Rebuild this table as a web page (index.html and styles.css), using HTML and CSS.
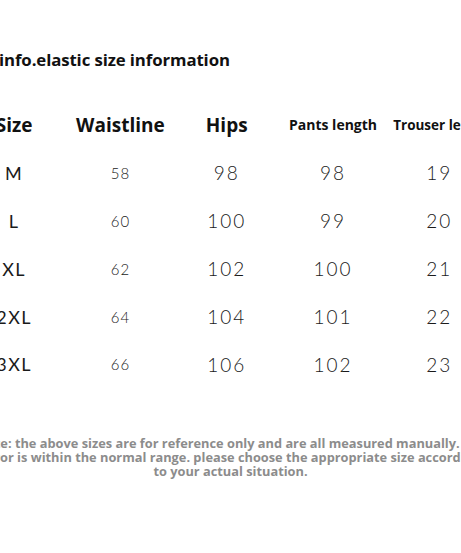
FILE: index.html
```html
<!DOCTYPE html>
<html>
<head>
<meta charset="utf-8">
<link rel="stylesheet" href="styles.css">
</head>
<body>
<div class="page">
  <div class="title">info.elastic size information</div>
  <div class="table">
    <div class="hd">Size</div>
    <div class="hd">Waistline</div>
    <div class="hd">Hips</div>
    <div class="hd sm">Pants length</div>
    <div class="hd xs">Trouser length</div>

    <div class="c sz">M</div><div class="c w">58</div><div class="c">98</div><div class="c">98</div><div class="c">19</div>
    <div class="c sz">L</div><div class="c w">60</div><div class="c">100</div><div class="c">99</div><div class="c">20</div>
    <div class="c sz">XL</div><div class="c w">62</div><div class="c">102</div><div class="c">100</div><div class="c">21</div>
    <div class="c sz">2XL</div><div class="c w">64</div><div class="c">104</div><div class="c">101</div><div class="c">22</div>
    <div class="c sz">3XL</div><div class="c w">66</div><div class="c">106</div><div class="c">102</div><div class="c">23</div>
  </div>
  <div class="note">
    <div>Note: the above sizes are for reference only and are all measured manually. the</div>
    <div>error is within the normal range. please choose the appropriate size according</div>
    <div>to your actual situation.</div>
  </div>
</div>
</body>
</html>
```
FILE: styles.css
```css
html, body {
  margin: 0;
  padding: 0;
  background: #fff;
}
body {
  width: 461px;
  height: 553px;
  overflow: hidden;
}
.page {
  width: 461px;
  height: 553px;
  overflow: hidden;
  font-family: "Open Sans", "Noto Sans", sans-serif;
  color: #111;
}
.title {
  margin-top: 49px;
  margin-left: -1px;
  font-size: 16.8px;
  font-weight: 700;
  line-height: 22px;
  white-space: nowrap;
  letter-spacing: -0.1px;
}
.table {
  margin-top: 30px;
  margin-left: -39px;
  display: grid;
  grid-template-columns: repeat(5, 106.3px);
  grid-auto-rows: 47.9px;
  width: 531.5px;
}
.hd, .c {
  display: flex;
  align-items: center;
  justify-content: center;
  white-space: nowrap;
}
.hd {
  font-size: 19px;
  font-weight: 700;
}
.hd.sm { font-size: 14px; }
.hd.xs {
  font-size: 13.5px;
  justify-content: flex-start;
  padding-left: 7px;
}
.c {
  font-family: "Lato", "Open Sans", sans-serif;
  font-weight: 300;
  font-size: 19px;
  letter-spacing: 2px;
  color: #1a1a1a;
}
.c.sz {
  font-family: "Lato", "Open Sans", sans-serif;
  font-weight: 400;
  font-size: 18px;
  letter-spacing: 1.5px;
}
.c.w {
  font-size: 15px;
  letter-spacing: 1px;
}
.note {
  margin-top: 49px;
  margin-left: -70px;
  width: 601px;
  text-align: center;
  font-size: 12.8px;
  font-weight: 700;
  line-height: 13.6px;
  color: #8c8c8c;
  white-space: nowrap;
}
```
